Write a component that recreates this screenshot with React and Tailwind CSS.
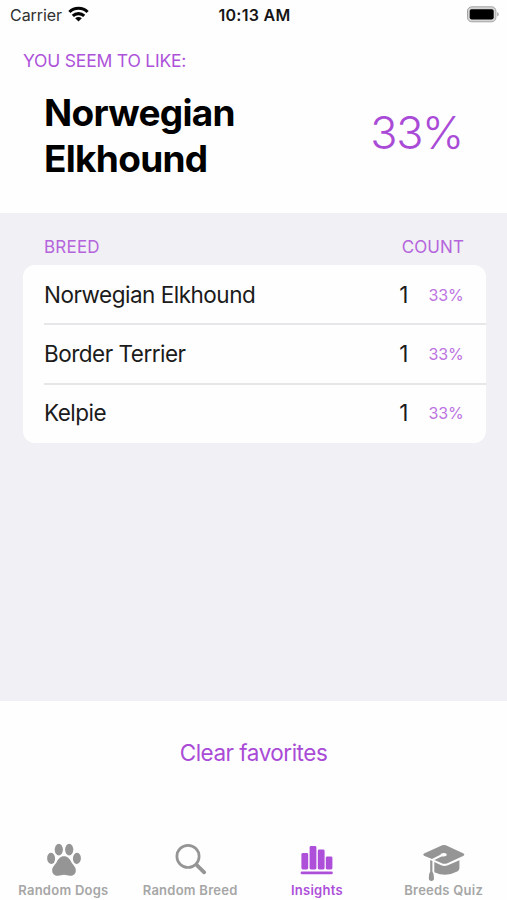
import React from 'react';

const breeds = [
  { name: 'Norwegian Elkhound', count: 1, share: '33%' },
  { name: 'Border Terrier', count: 1, share: '33%' },
  { name: 'Kelpie', count: 1, share: '33%' },
];

const PawIcon = () => (
  <svg className="ml-0.5" width="36" height="36" viewBox="0 0 36 36" fill="currentColor">
    <ellipse cx="5.1" cy="16.4" rx="4" ry="5.6" transform="rotate(-4 5.1 16.4)" />
    <ellipse cx="12.8" cy="7.6" rx="4.1" ry="5.8" />
    <ellipse cx="23.2" cy="7.6" rx="4.1" ry="5.8" />
    <ellipse cx="30.9" cy="16.4" rx="4" ry="5.6" transform="rotate(4 30.9 16.4)" />
    <path d="M18 14.2C21.8 14.2 23.6 16.8 25 19.6C26.6 23 30.1 24.8 29.8 28.8C29.6 32.4 27 34 24 33.8C21.8 33.6 20.4 32.8 18 32.8C15.6 32.8 14.2 33.6 12 33.8C9 34 6.4 32.4 6.2 28.8C5.9 24.8 9.4 23 11 19.6C12.4 16.8 14.2 14.2 18 14.2Z" />
  </svg>
);

const SearchIcon = () => (
  <svg className="ml-px" width="36" height="36" viewBox="0 0 36 36" fill="none" stroke="currentColor" strokeLinecap="round">
    <circle cx="15" cy="14.4" r="11.1" strokeWidth="2.7" />
    <path d="M23.8 23.1L31.2 30.3" strokeWidth="3.8" />
  </svg>
);

const ChartIcon = () => (
  <svg className="mb-0.5" width="36" height="36" viewBox="0 0 36 36" fill="currentColor">
    <rect x="2.4" y="12" width="6.8" height="16.4" rx="1.4" />
    <rect x="10.6" y="5" width="6.8" height="23.4" rx="1.4" />
    <rect x="18.8" y="8.6" width="6.8" height="19.8" rx="1.4" />
    <rect x="26.8" y="15.4" width="6.6" height="13" rx="1.4" />
    <rect x="1.6" y="30.4" width="32.2" height="2.9" rx="1.4" />
  </svg>
);

const CapIcon = () => (
  <svg className="mt-1.5" width="44" height="38" viewBox="0 0 44 38" fill="currentColor">
    <path d="M20.2 1.3Q22 .5 23.8 1.3L41.6 9.5Q43.2 10.6 41.6 11.8L25.4 19.2Q22.6 20.4 19.8 19.2L12.4 16L19.6 12.4Q24.8 13 24.8 10.6Q24.6 8.8 21.8 9Q18.6 9.2 18.4 10.8L10 15L2 11.8Q.4 10.6 2 9.5Z" />
    <path d="M12.3 18.1L19.2 21.2Q22.4 22.6 25.8 21.2L37.4 16.2V24.6Q37.2 26.4 35.2 27.6Q24 33.6 12.3 28.2Z" />
    <path d="M8.2 16L10.4 17.1V27.6Q12.4 30.4 11.8 35.8Q9.4 38.2 7 35.8Q6.4 30.4 8.2 27.6Z" />
  </svg>
);

const tabs = [
  { label: 'Random Dogs', icon: PawIcon },
  { label: 'Random Breed', icon: SearchIcon },
  { label: 'Insights', icon: ChartIcon, active: true },
  { label: 'Breeds Quiz', icon: CapIcon },
];

function StatusBar() {
  return (
    <div className="grid h-[30px] grid-cols-3 items-center pl-2.5 pr-2">
      <div className="flex items-center gap-1.5 text-[#303030]">
        <span className="text-base tracking-[-0.05px]">Carrier</span>
        <svg className="mb-0.5" width="21" height="16" viewBox="0 0 21 16" fill="none" stroke="#050505" strokeWidth="3.1">
          <path d="M1.4 6C6.4 1 14.6 1 19.6 6" />
          <path d="M4.8 9.9C8 6.9 13 6.9 16.2 9.9" />
          <path d="M10.5 15.4L7.2 12.2C9 10.5 12 10.5 13.8 12.2Z" fill="#050505" stroke="none" />
        </svg>
      </div>
      <span className="text-center text-base font-semibold tracking-[0.3px] text-[#151515]">10:13 AM</span>
      <svg className="justify-self-end" width="33" height="18" viewBox="0 0 33 18">
        <rect x="1.5" y=".8" width="28.4" height="15" rx="4.2" fill="#d4d4d4" stroke="#a3a3a3" />
        <rect x="3.7" y="3.2" width="24" height="10.2" rx="1.8" fill="#000" />
        <path d="M31.2 6Q32.7 6.6 32.7 8.3T31.2 10.6Z" fill="#a8a8a8" />
      </svg>
    </div>
  );
}

export default function App() {
  return (
    <div className="flex h-[900px] w-[507px] flex-col bg-[#fefefe] font-['Inter','Liberation_Sans',sans-serif] text-black">
      <StatusBar />

      {/* Favourite breed */}
      <section className="h-[183px] px-[23px] pt-[19px]">
        <p className="text-[17.5px] leading-6 tracking-[-0.2px] text-[#ad52d9]">YOU SEEM TO LIKE:</p>
        <div className="mt-[17px] flex items-center justify-between pl-[21px] pr-[21px]">
          <h1 className="w-[230px] text-[37px] font-bold leading-[46px] tracking-[-0.7px]">Norwegian Elkhound</h1>
          <span className="mb-1.5 text-[45px] font-[340] leading-[46px] tracking-[-1.3px] text-[#a94bd6]">33%</span>
        </div>
      </section>

      {/* Breed counts */}
      <section className="h-[488px] bg-[#f1f0f5] pl-[22.5px] pr-[21.5px] pt-[21.5px]">
        <div className="flex justify-between px-[21.5px] text-[17px] leading-6 text-[#b565dc]">
          <span className="tracking-[0.2px]">BREED</span>
          <span className="tracking-[0.1px]">COUNT</span>
        </div>
        <ul className="mt-[6.5px] h-[178px] rounded-xl bg-[#fefefe] pl-[21.5px] pt-px">
          {breeds.map((b, i) => (
            <li
              key={b.name}
              className={`flex h-[59.3px] items-center pr-[22px] text-[22.5px] text-[#1b1b1b] ${i < breeds.length - 1 ? 'border-b-2 border-[#e7e7e9]' : 'pb-0.5'}`}>
              <span className="flex-1 tracking-[-0.5px]">{b.name}</span>
              <span>{b.count}</span>
              <span className="w-[55px] text-right text-base tracking-[-0.15px] text-[#bc73e1]">{b.share}</span>
            </li>
          ))}
        </ul>
      </section>

      <div className="flex h-[104px] items-center justify-center">
        <button className="text-[22.5px] tracking-[-0.5px] text-[#a94bd6]">Clear favorites</button>
      </div>

      {/* Tab bar */}
      <nav className="grid flex-1 grid-cols-4 pt-9">
        {tabs.map(({ label, icon: Icon, active }) => (
          <button
            key={label}
            className={`flex flex-col items-center ${active ? 'text-[#ad4fd9]' : 'text-[#959595]'}`}>
            <span className="flex h-[38px] items-center"><Icon /></span>
            <span className={`mt-[3px] whitespace-nowrap text-[13px] font-semibold leading-4 tracking-[0.25px] ${active ? '' : 'text-[#a6a6a6]'}`}>{label}</span>
          </button>
        ))}
      </nav>
    </div>
  );
}
